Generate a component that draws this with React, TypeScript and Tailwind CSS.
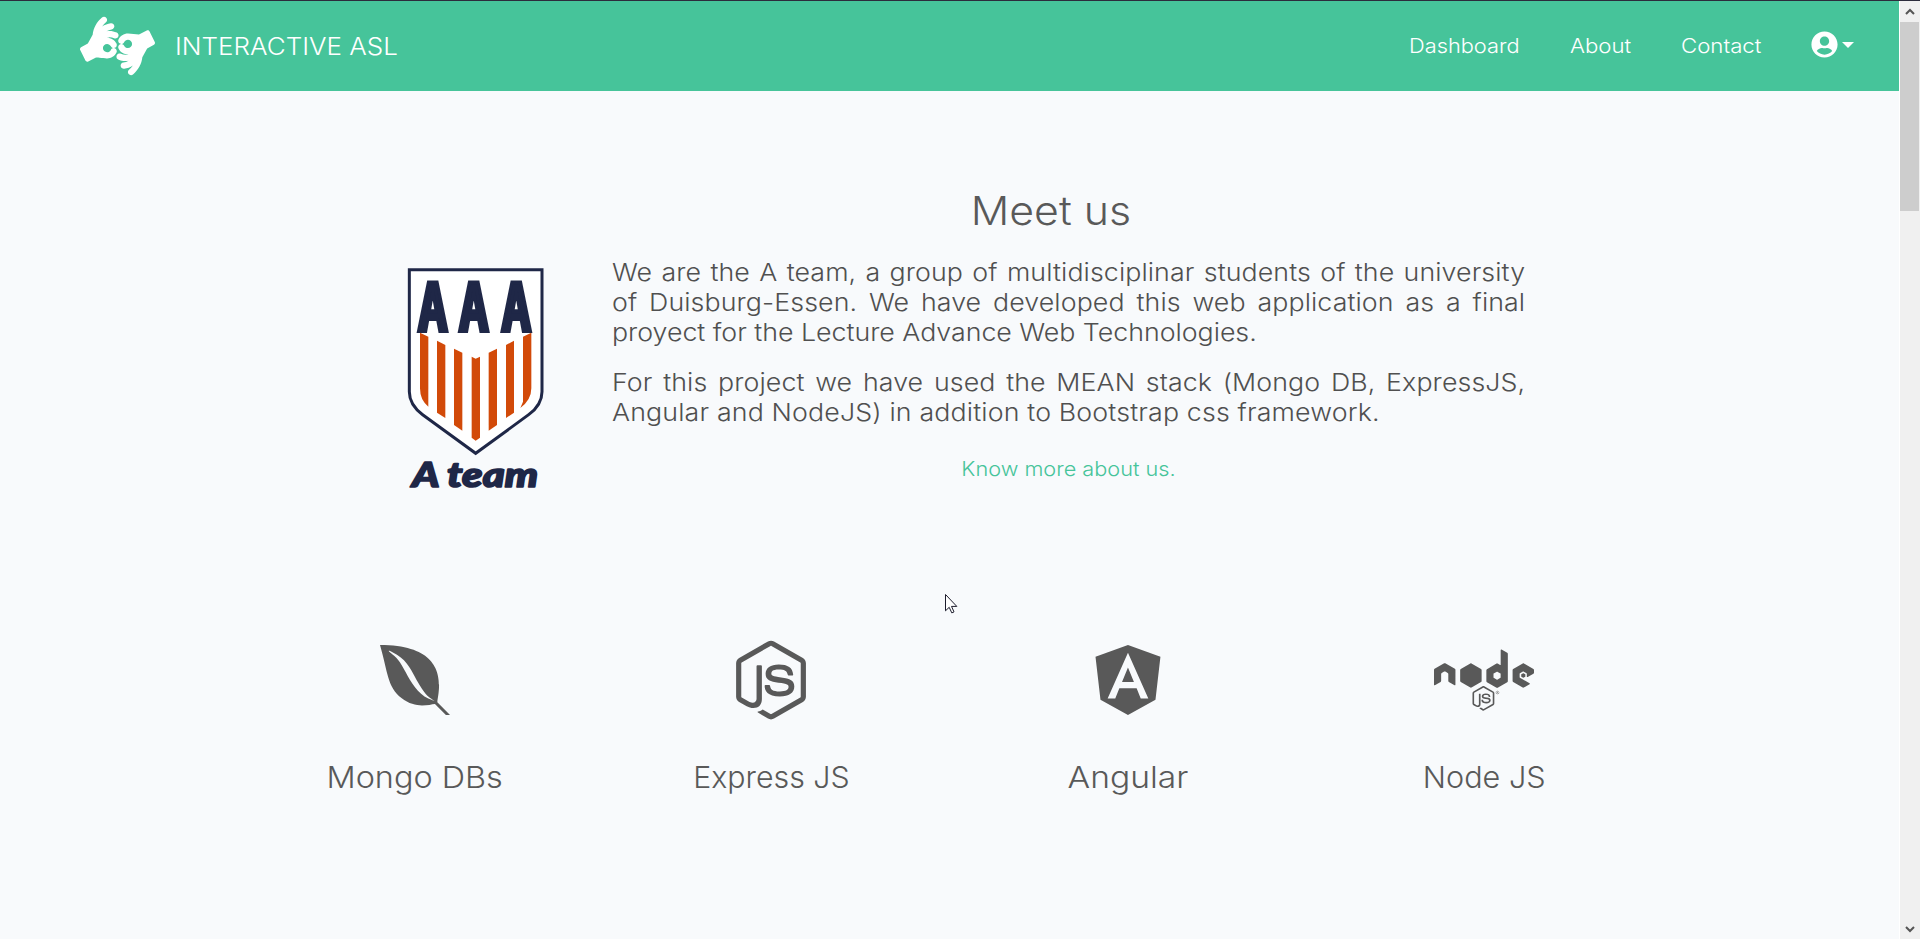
import type { ReactNode } from "react";
import {
  FaAmericanSignLanguageInterpreting,
  FaAngular,
  FaEnvira,
  FaNode,
  FaNodeJs,
  FaUserCircle,
} from "react-icons/fa";

function TeamLogo() {
  return (
    <svg viewBox="0 0 510 750" className="h-[250px] w-[170px]" aria-label="A team">
      <path
        d="M58 59H456V425Q456 464 416 494L257 610L98 494Q58 464 58 425Z"
        fill="#fff"
        stroke="#1f2747"
        strokeWidth="9"
      />
      <g
        fill="#1f2747"
        stroke="#1f2747"
        strokeWidth="12"
        strokeLinejoin="miter"
        fontFamily="'DejaVu Sans Mono', monospace"
        fontWeight="700"
        fontSize="196"
      >
        <text x="83" y="243" textLength="90" lengthAdjust="spacingAndGlyphs">A</text>
        <text x="206" y="243" textLength="90" lengthAdjust="spacingAndGlyphs">A</text>
        <text x="334" y="243" textLength="90" lengthAdjust="spacingAndGlyphs">A</text>
      </g>
      <g fill="#d24a09">
        <path d="M90 248L115 260V470Q90 450 90 415Z" />
        <path d="M141 272L166 285V504L141 488Z" />
        <path d="M192 296L217 308V542L192 525Z" />
        <path d="M245 320L257 326L270 320V563L257 572L245 563Z" />
        <path d="M296 308L321 296V525L296 542Z" />
        <path d="M348 285L372 272V488L348 504Z" />
        <path d="M399 260L424 248V415Q424 450 391 474L399 455Z" />
      </g>
      <text
        x="66"
        y="712"
        textLength="378"
        lengthAdjust="spacingAndGlyphs"
        fill="#1f2747"
        stroke="#1f2747"
        strokeWidth="5"
        strokeLinejoin="round"
        fontFamily="Lato, sans-serif"
        fontWeight="900"
        fontStyle="italic"
        fontSize="104"
      >
        A team
      </text>
    </svg>
  );
}

function Tech({ icon, children }: { icon: ReactNode; children: ReactNode }) {
  return (
    <div className="flex flex-1 flex-col items-center gap-[39px]">
      {icon}
      <h2 className="text-[30px] leading-9 font-light whitespace-nowrap">{children}</h2>
    </div>
  );
}

function Header() {
  return (
    <header className="flex h-[90px] items-center bg-[#46c49a] pr-[45px] pl-20 text-white">
      <FaAmericanSignLanguageInterpreting className="h-[60px] w-[75px]" />
      <span className="mt-0.5 ml-5 origin-left scale-x-[1.083] text-2xl leading-[30px] font-light">INTERACTIVE ASL</span>
      <nav className="ml-auto flex items-center text-xl leading-6 font-light">
        <a className="w-[161px] origin-left scale-x-[1.09]">Dashboard</a>
        <a className="w-[111px] origin-left scale-x-[1.11]">About</a>
        <a className="w-[130px] origin-left scale-x-[1.11]">Contact</a>
        <a className="mb-[3px] flex items-center gap-1">
          <FaUserCircle className="size-[27px]" />
          <span className="mt-px size-0 border-x-[6px] border-t-[6px] border-x-transparent border-t-white" />
        </a>
      </nav>
    </header>
  );
}

function ScrollRail() {
  return (
    <div className="flex h-full w-[21px] flex-col items-center border-l border-white bg-[#f0f0f0]">
      <div className="flex h-[21px] items-center">
        <svg viewBox="0 0 10 8" className="h-2 w-2.5" fill="none" stroke="#555" strokeWidth="2">
          <path d="M1 6L5 2L9 6" />
        </svg>
      </div>
      <div className="h-[189px] w-[19px] self-start bg-[#cdcdcd]" />
      <div className="mt-auto flex h-[21px] items-center">
        <svg viewBox="0 0 10 8" className="h-2 w-2.5" fill="none" stroke="#555" strokeWidth="2">
          <path d="M1 2L5 6L9 2" />
        </svg>
      </div>
    </div>
  );
}

export default function App() {
  return (
    <div className="relative flex h-[939px] w-[1920px] flex-col overflow-hidden border-t border-[#2c2c3c] bg-[#f8fafc] font-['Inter',sans-serif] text-[#595959]">
      <div className="flex min-h-0 flex-1">
        <div className="w-[1899px]">
          <Header />
          <main>
            <section className="flex pt-[96px] pl-[390px]">
              <div className="mt-[63px] w-[222px]">
                <TeamLogo />
              </div>
              <div className="w-[913px]">
                <h1 className="pr-[36px] text-center text-[40px] leading-[48px] font-light">
                  <span className="inline-block scale-x-[1.07]">Meet us</span>
                </h1>
                <div className="mt-[23px] w-[819px] origin-left scale-x-[1.115] text-2xl leading-[30px] font-light tracking-[0.08px] whitespace-nowrap text-[#505050]">
                  <p>
                    <span className="block [text-align-last:justify]">We are the A team, a group of multidisciplinar students of the university</span>
                    <span className="block [text-align-last:justify]">of Duisburg-Essen. We have developed this web application as a final</span>
                    <span className="block tracking-[-0.02px]">proyect for the Lecture Advance Web Technologies.</span>
                  </p>
                  <p className="mt-5">
                    <span className="block [text-align-last:justify]">For this project we have used the MEAN stack (Mongo DB, ExpressJS,</span>
                    <span className="block tracking-[0.13px]">Angular and NodeJS) in addition to Bootstrap css framework.</span>
                  </p>
                </div>
                <a className="mt-[29px] block scale-x-[1.085] text-center text-xl leading-6 font-light text-[#46c49a]">Know more about us.</a>
              </div>
            </section>
            <section className="mt-[140px] ml-[237px] flex w-[1425px]">
              <Tech icon={<FaEnvira className="h-20 w-[70px]" />}>
                <span className="inline-block scale-x-[1.08]">Mongo DBs</span>
              </Tech>
              <Tech icon={<FaNodeJs className="h-20 w-[70px]" />}>
                <span className="inline-block scale-x-[1.01]">Express JS</span>
              </Tech>
              <Tech icon={<FaAngular className="h-20 w-[70px]" />}>
                <span className="inline-block scale-x-[1.12]">Angular</span>
              </Tech>
              <Tech icon={<FaNode className="h-20 w-[100px]" />}>
                <span className="inline-block scale-x-[1.02]">Node JS</span>
              </Tech>
            </section>
          </main>
        </div>
        <ScrollRail />
      </div>
      <svg viewBox="0 0 13 20" className="absolute top-[593px] left-[945px] h-5 w-[13px]">
        <path d="M.5 .5V16.8L4.2 13.3L6.8 18.9L9 17.9L6.5 12.4H11.8Z" fill="#fff" stroke="#1c1c2c" />
      </svg>
    </div>
  );
}
